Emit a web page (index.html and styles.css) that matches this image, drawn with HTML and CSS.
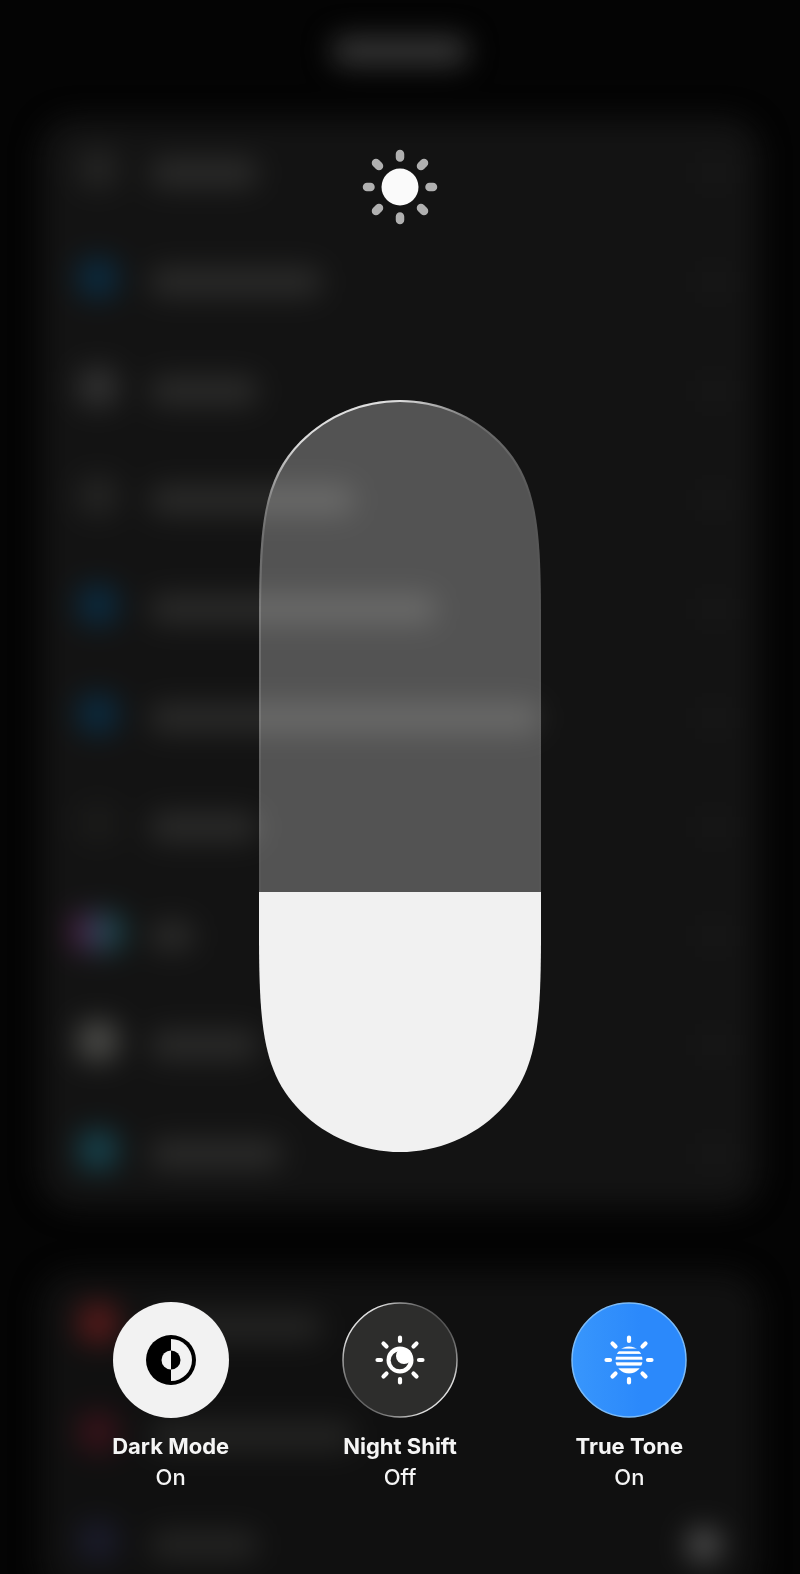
FILE: index.html
```
<!DOCTYPE html>
<html lang="en">
<head>
    <meta charset="UTF-8">
    <meta name="viewport" content="width=device-width, initial-scale=1">
    <title>Brightness</title>
    <link rel="stylesheet" href="styles.css">
</head>
<body>

<!-- settings list, out of focus behind the controls -->
<div class="backdrop" aria-hidden="true">
    <div class="backdrop-inner">
        <div class="heading"><span class="bar"></span></div>
        <div class="card">
            <div class="row"><i class="icon dim"></i><span class="bar w-s"></span><i class="chevron"></i></div>
            <div class="row"><i class="icon blue"></i><span class="bar w-m"></span><i class="chevron"></i></div>
            <div class="row"><i class="icon gray"></i><span class="bar w-s"></span><i class="chevron"></i></div>
            <div class="row"><i class="icon dim"></i><span class="bar w-l"></span><i class="chevron"></i></div>
            <div class="row"><i class="icon blue"></i><span class="bar w-xl"></span><i class="chevron"></i></div>
            <div class="row"><i class="icon blue"></i><span class="bar w-xxl"></span><i class="chevron"></i></div>
            <div class="row"><i class="icon dark"></i><span class="bar w-s"></span><i class="chevron"></i></div>
            <div class="row"><i class="icon siri"></i><span class="bar w-xs"></span><i class="chevron"></i></div>
            <div class="row"><i class="icon light"></i><span class="bar w-s"></span><i class="chevron"></i></div>
            <div class="row"><i class="icon teal"></i><span class="bar w-sm"></span><i class="chevron"></i></div>
        </div>
        <div class="card card-dim">
            <div class="row"><i class="icon red"></i><span class="bar w-m"></span></div>
            <div class="row"><i class="icon crimson"></i><span class="bar w-l"></span></div>
            <div class="row"><i class="icon indigo"></i><span class="bar w-s"></span><i class="knob"></i></div>
        </div>
    </div>
</div>

<main class="panel">
    <svg class="sun" viewBox="-38 -38 76 76" aria-hidden="true">
        <circle r="18.5" fill="#fafafa"/>
        <g stroke="#b0b0b0" stroke-width="8.5" stroke-linecap="round">
            <path d="M0-29.500V-33M0 29.500V33M-29.500 0H-33M29.500 0H33"/>
            <path d="M-21-21L-24-24M21-21L24-24M-21 21L-24 24M21 21L24 24"/>
        </g>
    </svg>

    <div class="slider">
        <svg class="slider-art" viewBox="0 0 282 752" aria-hidden="true">
            <defs>
                <clipPath id="pill">
                    <path id="pill-shape" d="M141 0C178.400 0 214.300 14.800 240.700 41.300C278 79 282 125 282 220V532C282 627 278 673 240.700 710.700C214.300 737.200 178.400 752 141 752C103.600 752 67.700 737.200 41.300 710.700C4 673 0 627 0 532V220C0 125 4 79 41.300 41.300C67.700 14.800 103.600 0 141 0Z"/>
                </clipPath>
                <linearGradient id="rim" gradientUnits="userSpaceOnUse" x1="40" y1="0" x2="270" y2="120">
                    <stop offset="0" stop-color="#fff" stop-opacity=".85"/>
                    <stop offset=".35" stop-color="#fff" stop-opacity=".8"/>
                    <stop offset=".65" stop-color="#fff" stop-opacity=".15"/>
                    <stop offset="1" stop-color="#fff" stop-opacity=".1"/>
                </linearGradient>
                <linearGradient id="rim-fade" x1="0" y1="0" x2="0" y2="1">
                    <stop offset="0" stop-color="#fff"/>
                    <stop offset=".06" stop-color="#eee"/>
                    <stop offset=".14" stop-color="#333"/>
                    <stop offset="1" stop-color="#222"/>
                </linearGradient>
                <mask id="rim-mask"><rect width="282" height="752" fill="url(#rim-fade)"/></mask>
            </defs>
            <g clip-path="url(#pill)" class="track">
                <rect width="282" height="492" fill="#404040"/>
            </g>
            <g clip-path="url(#pill)">
                <rect y="492" width="282" height="260" fill="#f1f1f1"/>
                <g mask="url(#rim-mask)">
                    <use href="#pill-shape" fill="none" stroke="url(#rim)" stroke-width="4"/>
                </g>
            </g>
        </svg>
        <input class="slider-input" type="range" min="0" max="100" value="35" aria-label="Brightness">
    </div>

    <div class="toggles">
        <button class="toggle" type="button" aria-pressed="true">
            <svg class="toggle-art" viewBox="-58 -58 116 116" aria-hidden="true">
                <circle r="58" fill="#f2f2f2"/>
                <circle r="25"/>
                <path d="M0-21A21 21 0 0 1 0 21Z" fill="#f2f2f2"/>
                <path d="M0-9.500A9.500 9.500 0 0 0 0 9.500Z" fill="#f2f2f2"/>
                <path d="M0-9.500A9.500 9.500 0 0 1 0 9.500Z"/>
            </svg>
            <span class="toggle-name">Dark Mode</span>
            <span class="toggle-state">On</span>
        </button>
        <button class="toggle" type="button" aria-pressed="false">
            <svg class="toggle-art" viewBox="-58 -58 116 116" aria-hidden="true">
                <defs>
                    <linearGradient id="night-rim" x1="0" y1="1" x2="1" y2="0">
                        <stop offset=".15" stop-color="#666"/>
                        <stop offset=".35" stop-color="#ddd"/>
                        <stop offset=".65" stop-color="#ddd"/>
                        <stop offset=".85" stop-color="#555"/>
                    </linearGradient>
                </defs>
                <circle r="57" fill="#2d2d2c" stroke="url(#night-rim)" stroke-width="1.5"/>
                <g stroke="#fff" stroke-width="4.2" stroke-linecap="round">
                    <path d="M0-19V-22.500M0 19V22.500M-19 0H-22.500M19 0H22.500"/>
                    <path d="M-13.500-13.500L-16.500-16.500M13.500-13.500L16.500-16.500M-13.500 13.500L-16.500 16.500M13.500 13.500L16.500 16.500"/>
                </g>
                <circle r="13.5" fill="#fff"/>
                <circle cx="-.3" cy=".3" r="9" fill="#2d2d2c"/>
                <circle cx="4" cy="-4" r="8" fill="#fff"/>
            </svg>
            <span class="toggle-name">Night Shift</span>
            <span class="toggle-state">Off</span>
        </button>
        <button class="toggle" type="button" aria-pressed="true">
            <svg class="toggle-art" viewBox="-58 -58 116 116" aria-hidden="true">
                <defs>
                    <clipPath id="disc"><circle r="13.5"/></clipPath>
                    <linearGradient id="tone" x1="0" y1="0" x2="1" y2="0">
                        <stop offset="0" stop-color="#3896fc"/>
                        <stop offset=".6" stop-color="#2b89fb"/>
                    </linearGradient>
                </defs>
                <circle r="57" fill="url(#tone)" stroke="#7dbcf8" stroke-width="1.5"/>
                <g stroke="#fff" stroke-width="4.2" stroke-linecap="round">
                    <path d="M0-19V-22.500M0 19V22.500M-19 0H-22.500M19 0H22.500"/>
                    <path d="M-13.500-13.500L-16.500-16.500M13.500-13.500L16.500-16.500M-13.500 13.500L-16.500 16.500M13.500 13.500L16.500 16.500"/>
                </g>
                <g clip-path="url(#disc)" fill="#fff">
                    <rect x="-14" y="-14" width="28" height="2.600"/>
                    <rect x="-14" y="-8.700" width="28" height="2.600"/>
                    <rect x="-14" y="-3.300" width="28" height="3"/>
                    <rect x="-14" y="2.300" width="28" height="3.300"/>
                    <rect x="-14" y="8.300" width="28" height="5.500"/>
                </g>
            </svg>
            <span class="toggle-name">True Tone</span>
            <span class="toggle-state">On</span>
        </button>
    </div>
</main>

</body>
</html>
```
FILE: styles.css
```
* {
    box-sizing: border-box;
}
body {
    position: relative;
    min-height: 100vh;
    margin: 0;
    background: #040404;
    color: #f5f5f5;
    font-family: Inter, "Liberation Sans", sans-serif;
}

/* blurred list */
.backdrop {
    position: absolute;
    inset: 0;
    overflow: hidden;
}
.backdrop-inner {
    padding: 0 40px;
    filter: blur(14px);
}
.heading {
    display: flex;
    justify-content: center;
    height: 118px;
    padding-top: 36px;
}
.heading .bar {
    width: 136px;
    background: #343434;
}
.card {
    margin-bottom: 64px;
    border-radius: 36px;
    background: #131313;
}
.card-dim {
    background: #101010;
}
.row {
    display: flex;
    align-items: center;
    gap: 32px;
    height: 109px;
    padding: 0 38px;
}
.bar {
    height: 30px;
    border-radius: 12px;
    background: #2a2a29;
}
.card-dim .bar {
    background: #232322;
}
.w-xs { width: 44px; }
.w-s { width: 108px; }
.w-sm { width: 132px; }
.w-m { width: 172px; }
.w-l { width: 204px; }
.w-xl { width: 286px; }
.w-xxl { width: 390px; }
.icon {
    width: 40px;
    height: 40px;
    margin-bottom: 8px;
    border-radius: 12px;
}
.dim { background: #232322; }
.dark { background: #1a1a19; }
.gray { background: #303030; }
.light { background: #4a4a47; }
.blue { background: #0b2a3e; }
.teal { background: #16404a; }
.red { background: #541a1a; }
.crimson { background: #361219; }
.indigo { background: #1a1b2a; }
.siri {
    width: 52px;
    margin: 0 -6px 8px;
    background: linear-gradient(90deg, #5a1446, #2b4050 50%, #14464a);
}
.chevron {
    width: 16px;
    height: 24px;
    margin-left: auto;
    background: #1b1b1b;
}
.knob {
    width: 36px;
    height: 36px;
    margin-left: auto;
    border-radius: 50%;
    background: #4c4c4c;
}

/* controls */
.panel {
    position: relative;
    display: flex;
    flex-direction: column;
    align-items: center;
    padding: 149px 56px 72px;
}
.sun {
    width: 76px;
    height: 76px;
}
.slider {
    position: relative;
    width: 282px;
    margin: 175px 0 150px;
}
.slider-art {
    display: block;
    width: 100%;
}
.track {
    mix-blend-mode: plus-lighter;
}
.slider-input {
    position: absolute;
    inset: 0;
    width: 100%;
    height: 100%;
    margin: 0;
    appearance: none;
    background: transparent;
    writing-mode: vertical-lr;
    direction: rtl;
    cursor: pointer;
}
.slider-input::-webkit-slider-thumb {
    appearance: none;
    width: 100%;
    height: 2px;
    background: transparent;
}
.toggles {
    display: grid;
    grid-template-columns: repeat(3, 1fr);
    width: 100%;
}
.toggle {
    display: flex;
    flex-direction: column;
    align-items: center;
    padding: 0;
    border: 0;
    background: none;
    color: inherit;
    font: inherit;
    font-size: 22px;
    line-height: 31px;
    cursor: pointer;
}
.toggle-art {
    width: 116px;
    height: 116px;
    margin-bottom: 13px;
}
.toggle-name {
    font-weight: 700;
}
.toggle-state {
    font-weight: 500;
}
```
